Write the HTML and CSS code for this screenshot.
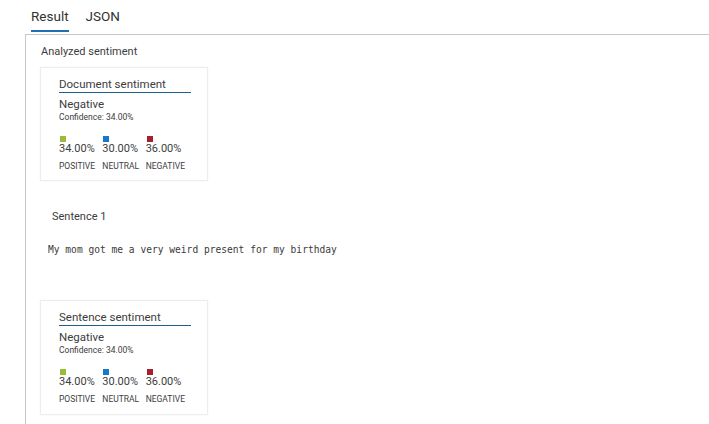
FILE: index.html
```html
<!DOCTYPE html>
<html>
<head>
<meta charset="utf-8">
<link rel="stylesheet" href="styles.css">
</head>
<body>
<div class="tabs">
  <div class="tab active">Result</div>
  <div class="tab">JSON</div>
</div>
<div class="panel">
  <div class="heading">Analyzed sentiment</div>
  <div class="card">
    <div class="card-title">Document sentiment</div>
    <div class="label-main">Negative</div>
    <div class="confidence">Confidence: 34.00%</div>
    <div class="scores">
      <div class="score"><span class="sq pos"></span><span class="val">34.00%</span><span class="name">POSITIVE</span></div>
      <div class="score"><span class="sq neu"></span><span class="val">30.00%</span><span class="name">NEUTRAL</span></div>
      <div class="score"><span class="sq neg"></span><span class="val">36.00%</span><span class="name">NEGATIVE</span></div>
    </div>
  </div>
  <div class="sentence-label">Sentence 1</div>
  <div class="sentence-text">My mom got me a very weird present for my birthday</div>
  <div class="card card2">
    <div class="card-title">Sentence sentiment</div>
    <div class="label-main">Negative</div>
    <div class="confidence">Confidence: 34.00%</div>
    <div class="scores">
      <div class="score"><span class="sq pos"></span><span class="val">34.00%</span><span class="name">POSITIVE</span></div>
      <div class="score"><span class="sq neu"></span><span class="val">30.00%</span><span class="name">NEUTRAL</span></div>
      <div class="score"><span class="sq neg"></span><span class="val">36.00%</span><span class="name">NEGATIVE</span></div>
    </div>
  </div>
</div>
</body>
</html>
```
FILE: styles.css
```css
html, body {
  margin: 0;
  padding: 0;
  background: #fff;
  font-family: "Roboto", "Open Sans", sans-serif;
  color: #3d3d3d;
  overflow: hidden;
}
.tabs {
  display: flex;
  gap: 17px;
  padding-left: 31px;
  height: 34px;
}
.tab {
  font-size: 13.5px;
  line-height: 18px;
  padding-top: 7px;
  color: #323130;
}
.tab.active {
  border-bottom: 2px solid #1f6fb2;
  box-sizing: border-box;
  height: 32px;
}
.panel {
  margin-left: 25px;
  border-left: 1px solid #c8c8c8;
  border-top: 1px solid #c8c8c8;
  padding: 10px 0 0 14px;
  height: 400px;
}
.heading {
  font-size: 11px;
  line-height: 14px;
  margin-left: 1px;
}
.card {
  width: 168px;
  box-sizing: border-box;
  margin-top: 8px;
  border: 1px solid #ededed;
  box-shadow: 0 0 2px rgba(0,0,0,0.06);
  padding: 9px 18px 6px 18px;
  height: 114px;
}
.card2 {
  margin-top: 44px;
  height: 115px;
}
.card-title {
  font-size: 11.5px;
  line-height: 14px;
  width: 132px;
  border-bottom: 1px solid #1f5f8b;
  padding-bottom: 1px;
}
.label-main {
  margin-top: 4px;
  font-size: 11.5px;
  line-height: 14px;
}
.confidence {
  font-size: 8.5px;
  line-height: 12px;
}
.scores {
  display: flex;
  margin-top: 13px;
}
.score {
  display: flex;
  flex-direction: column;
  align-items: flex-start;
  width: 44px;
}
.sq {
  display: block;
  width: 6px;
  height: 6px;
  margin-left: 1px;
}
.sq.pos { background: #9cbb3a; }
.sq.neu { background: #1a78c8; }
.sq.neg { background: #a7202d; }
.val {
  font-size: 11px;
  line-height: 14px;
}
.name {
  font-size: 8.5px;
  line-height: 11px;
  margin-top: 5px;
}
.sentence-label {
  margin-top: 29px;
  margin-left: 12px;
  font-size: 11px;
  line-height: 14px;
}
.sentence-text {
  margin-top: 20px;
  margin-left: 8px;
  font-family: "DejaVu Sans Mono", "Liberation Mono", monospace;
  font-size: 9.6px;
  line-height: 12px;
  color: #3b3a39;
}
```
